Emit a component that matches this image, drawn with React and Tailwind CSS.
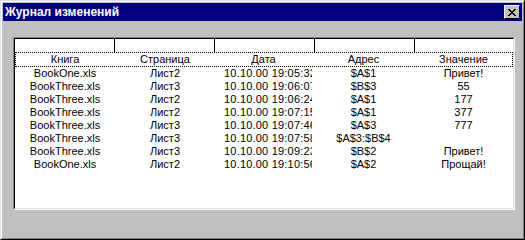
import React from "react";

const rows = [
  ["BookOne.xls", "Лист2", "10.10.00 19:05:32", "$A$1", "Привет!"],
  ["BookThree.xls", "Лист3", "10.10.00 19:06:07", "$B$3", "55"],
  ["BookThree.xls", "Лист2", "10.10.00 19:06:24", "$A$1", "177"],
  ["BookThree.xls", "Лист2", "10.10.00 19:07:15", "$A$1", "377"],
  ["BookThree.xls", "Лист3", "10.10.00 19:07:46", "$A$3", "777"],
  ["BookThree.xls", "Лист3", "10.10.00 19:07:58", "$A$3:$B$4", ""],
  ["BookThree.xls", "Лист3", "10.10.00 19:09:23", "$B$2", "Привет!"],
  ["BookOne.xls", "Лист2", "10.10.00 19:10:56", "$A$2", "Прощай!"],
];

function Row({ cells, h = "h-[13px]", date = true }) {
  return (
    <div className={`flex ${h} items-center leading-[13px]`}>
      <div className="w-[100px] text-center whitespace-nowrap">{cells[0]}</div>
      <div className="w-[100px] text-center whitespace-nowrap">{cells[1]}</div>
      {date ? (
        <div className="w-[97px] pl-[9px] overflow-hidden whitespace-nowrap tracking-[0.2px]">{cells[2]}</div>
      ) : (
        <div className="w-[97px] text-center whitespace-nowrap">{cells[2]}</div>
      )}
      <div className="w-[103px] text-center whitespace-nowrap">{cells[3]}</div>
      <div className="w-[97px] text-center whitespace-nowrap">{cells[4]}</div>
    </div>
  );
}

export default function App() {
  return (
    <div
      className="w-[525px] h-[240px] border border-t-[#dfdfdf] border-l-[#dfdfdf] border-r-black border-b-black bg-[#c0c0c0]"
      style={{ fontFamily: '"Liberation Sans", Arial, sans-serif' }}
    >
      <div className="h-full border border-t-white border-l-white border-r-[#808080] border-b-[#808080] p-[1px] flex flex-col">
        {/* Title bar */}
        <div className="h-[18px] bg-[#000080] flex items-center justify-between pl-[2px] pr-[2px]">
          <span className="text-white font-bold text-[12px] leading-none">Журнал изменений</span>
          <div className="w-[16px] h-[14px] bg-[#c0c0c0] border border-t-white border-l-white border-r-black border-b-black flex items-center justify-center">
            <svg width="8" height="7" viewBox="0 0 8 7" shapeRendering="crispEdges">
              <path d="M0 0h2v1h-2zM6 0h2v1h-2zM1 1h2v1h-2zM5 1h2v1h-2zM2 2h4v1h-4zM3 3h2v1h-2zM2 4h4v1h-4zM1 5h2v1h-2zM5 5h2v1h-2zM0 6h2v1h-2zM6 6h2v1h-2z" fill="black" />
            </svg>
          </div>
        </div>
        {/* Body */}
        <div className="flex-1 pt-[16px] pl-[10px]">
          <div className="w-[502px] h-[173px] border border-t-[#808080] border-l-[#808080] border-r-white border-b-white">
            <div className="h-full border border-t-black border-l-black border-r-[#dfdfdf] border-b-[#dfdfdf] bg-white text-[#000000] text-[11px]">
              {/* header cells */}
              <div className="flex h-[13px]">
                <div className="w-[100px] border-r border-black" />
                <div className="w-[100px] border-r border-black" />
                <div className="w-[100px] border-r border-black" />
                <div className="w-[100px] border-r border-black" />
                <div className="flex-1" />
              </div>
              {/* focused first item */}
              <div className="border border-dotted border-black">
                <div className="-mx-[1px]">
                  <Row cells={["Книга", "Страница", "Дата", "Адрес", "Значение"]} h="h-[13px]" date={false} />
                </div>
              </div>
              {rows.map((r, i) => (
                <Row key={i} cells={r} />
              ))}
            </div>
          </div>
        </div>
      </div>
    </div>
  );
}
